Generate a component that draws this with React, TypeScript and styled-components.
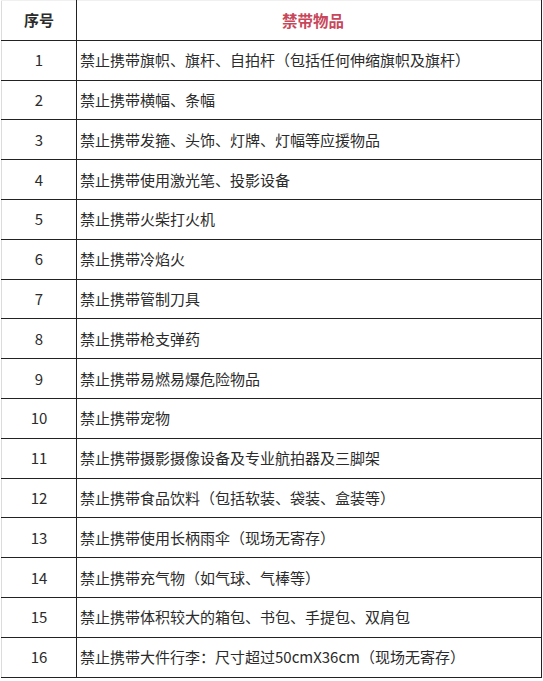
import React from 'react'
import styled, { createGlobalStyle } from 'styled-components'

const GlobalStyle = createGlobalStyle`
  html, body {
    margin: 0;
    padding: 0;
    background: #fff;
  }
  body {
    font-family: "Noto Sans CJK SC", "Noto Sans", sans-serif;
    color: #2b2b2b;
  }
`

const items = [
  '禁止携带旗帜、旗杆、自拍杆（包括任何伸缩旗帜及旗杆）',
  '禁止携带横幅、条幅',
  '禁止携带发箍、头饰、灯牌、灯幅等应援物品',
  '禁止携带使用激光笔、投影设备',
  '禁止携带火柴打火机',
  '禁止携带冷焰火',
  '禁止携带管制刀具',
  '禁止携带枪支弹药',
  '禁止携带易燃易爆危险物品',
  '禁止携带宠物',
  '禁止携带摄影摄像设备及专业航拍器及三脚架',
  '禁止携带食品饮料（包括软装、袋装、盒装等）',
  '禁止携带使用长柄雨伞（现场无寄存）',
  '禁止携带充气物（如气球、气棒等）',
  '禁止携带体积较大的箱包、书包、手提包、双肩包',
  '禁止携带大件行李：尺寸超过50cmX36cm（现场无寄存）',
]

export default function App() {
  return (
    <>
      <GlobalStyle />
      <Page>
        <Table>
          <thead>
            <tr>
              <HeadCell>序号</HeadCell>
              <HeadCell $accent>禁带物品</HeadCell>
            </tr>
          </thead>
          <tbody>
            {items.map((text, index) => (
              <tr key={index}>
                <NumCell>{index + 1}</NumCell>
                <TextCell>{text}</TextCell>
              </tr>
            ))}
          </tbody>
        </Table>
      </Page>
    </>
  )
}

const Page = styled.div`
  padding-left: 1px;
  width: 542px;
`

const Table = styled.table`
  width: 541px;
  border-collapse: collapse;
  table-layout: fixed;
  border-left: 1px solid #dcdcdc;
  border-top: 1px solid #f0f0f0;
  font-size: 15px;
`

const Cell = styled.td`
  height: 38.8px;
  padding: 0;
  border-right: 1px solid #222;
  border-bottom: 1px solid #222;
  line-height: 20px;
  white-space: nowrap;
  overflow: hidden;
`

const HeadCell = styled(Cell).attrs({ as: 'th' })<{ $accent?: boolean }>`
  width: ${(p) => (p.$accent ? 'auto' : '74px')};
  text-align: center;
  font-weight: bold;
  font-size: ${(p) => (p.$accent ? '15.5px' : '15px')};
  color: ${(p) => (p.$accent ? '#c8475b' : '#2b2b2b')};
  padding-left: ${(p) => (p.$accent ? '8px' : '0')};
`

const NumCell = styled(Cell)`
  width: 74px;
  text-align: center;
`

const TextCell = styled(Cell)`
  padding-left: 3px;
  text-align: left;
`
